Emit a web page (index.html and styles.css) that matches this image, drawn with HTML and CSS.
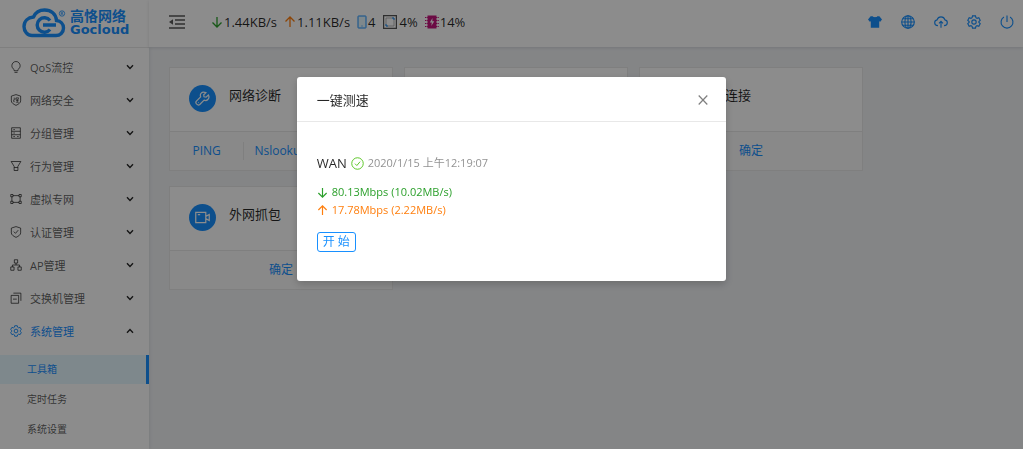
FILE: index.html
```html
<!DOCTYPE html>
<html lang="zh-CN">
<head>
    <meta charset="UTF-8">
    <meta name="viewport" content="width=device-width, initial-scale=1.0">
    <title>高恪网络 - 工具箱</title>
    <link rel="stylesheet" href="styles.css">
</head>
<body>
    <!-- shared icons -->
    <svg class="sprite" aria-hidden="true">
        <symbol id="i-chevron" viewBox="0 0 8 8"><path d="M1 2.2l3 3.2 3-3.2"/></symbol>
        <symbol id="i-gear" viewBox="0 0 16 16"><path d="M6.3 1h3.4l.5 2 1.3.8 2-.6 1.6 2.9-1.5 1.4v1l1.5 1.4-1.6 2.9-2-.6-1.3.8-.5 2H6.3l-.5-2-1.3-.8-2 .6L.9 9.9l1.500-1.400v-1L.9 6.100l1.600-2.900 2 .6L5.800 3z"/><circle cx="8" cy="8" r="2.5"/></symbol>
        <symbol id="i-down" viewBox="0 0 12 12"><path d="M6 1v10M1.500 6.500L6 11l4.500-4.500"/></symbol>
        <symbol id="i-up" viewBox="0 0 12 12"><path d="M6 11V1M1.500 5.500L6 1l4.500 4.500"/></symbol>
    </svg>

    <div class="layout">
        <aside class="sidebar">
            <a href="/" class="logo">
                <svg class="logo-mark" viewBox="0 0 44 30" aria-hidden="true">
                    <path d="M10 27.500h24c4 0 7.500-3 7.500-7.500 0-4-3-7-7-7.500C34 6 29 2 22.500 2c-5 0-9 2.500-11 7C6 9.500 2 13 2 18.500c0 5 3.500 9 8 9z" fill="none" stroke="#1890ff" stroke-width="3.400"/>
                    <path d="M28 12.500a7.200 7.200 0 1 0 0 9M21 17h13" fill="none" stroke="#1890ff" stroke-width="3.400"/>
                    <circle cx="40" cy="5.500" r="2.700" fill="none" stroke="#1890ff" stroke-width="0.800"/>
                    <path d="M39.200 7V4.200h1.400v1.500h-1.400M40.300 5.700l.8 1.300" fill="none" stroke="#1890ff" stroke-width="0.600"/>
                </svg>
                <span class="logo-text">
                    <span class="logo-cn">高恪网络</span>
                    <span class="logo-en">Gocloud</span>
                </span>
            </a>
            <nav>
                <ul class="menu">
                    <li><a href="#qos"><svg class="icon" viewBox="0 0 16 16"><path d="M5.500 11.500C3.500 10 2.500 8.500 2.500 6.200a5.500 5.500 0 0 1 11 0c0 2.300-1 3.800-3 5.300v1.500h-5zM6 15.200h4"/></svg><span>QoS流控</span><svg class="arrow"><use href="#i-chevron"/></svg></a></li>
                    <li><a href="#security"><svg class="icon" viewBox="0 0 16 16"><path d="M8 .8l6.200 2v6.400c0 2.400-2.500 4.200-6.200 6-3.700-1.800-6.200-3.600-6.200-6V2.800z"/><path d="M4.800 5.500h2v2.200h-2v2.500h1.500M8.300 5h3v2h-3zM9.800 7v4M8 8.700h3.500M7.800 11h4" stroke-width="1"/></svg><span>网络安全</span><svg class="arrow"><use href="#i-chevron"/></svg></a></li>
                    <li><a href="#group"><svg class="icon" viewBox="0 0 16 16"><path d="M2.200 1h11.600v14H2.200zM2.200 5.700h11.600M2.200 10.300h11.600M4.500 3.400h2M4.500 8h2M4.500 12.700h2M9.500 12.700h2"/></svg><span>分组管理</span><svg class="arrow"><use href="#i-chevron"/></svg></a></li>
                    <li><a href="#behavior"><svg class="icon" viewBox="0 0 16 16"><path d="M1.500 2h13l-4 6.500V14h-5V8.500zM5.500 10h5"/></svg><span>行为管理</span><svg class="arrow"><use href="#i-chevron"/></svg></a></li>
                    <li><a href="#vpn"><svg class="icon" viewBox="0 0 16 16"><path d="M1 2h3v3H1zM12 2h3v3h-3zM1 11h3v3H1zM12 11h3v3h-3zM4 3.500h8M4 12.500h8M2.500 5v6M13.500 5v6"/></svg><span>虚拟专网</span><svg class="arrow"><use href="#i-chevron"/></svg></a></li>
                    <li><a href="#auth"><svg class="icon" viewBox="0 0 16 16"><path d="M8 .8l6.200 2v6.400c0 2.400-2.500 4.200-6.200 6-3.700-1.800-6.200-3.600-6.200-6V2.800zM5 7.500l2.300 2.300L11 5.500"/></svg><span>认证管理</span><svg class="arrow"><use href="#i-chevron"/></svg></a></li>
                    <li><a href="#ap"><svg class="icon" viewBox="0 0 16 16"><path d="M5.800 1h4.400v4.400H5.800zM1 10.600h4.400V15H1zM10.600 10.600H15V15h-4.400zM8 5.400V8M3.200 10.600V8h9.600v2.600"/></svg><span>AP管理</span><svg class="arrow"><use href="#i-chevron"/></svg></a></li>
                    <li><a href="#switch"><svg class="icon" viewBox="0 0 16 16"><path d="M1.500 4.500h10V15h-10zM4.500 1.500h10v10.300M4 9.500h5"/></svg><span>交换机管理</span><svg class="arrow"><use href="#i-chevron"/></svg></a></li>
                    <li class="open">
                        <a href="#system"><svg class="icon"><use href="#i-gear"/></svg><span>系统管理</span><svg class="arrow"><use href="#i-chevron"/></svg></a>
                        <ul class="submenu">
                            <li><a href="#tools" class="active">工具箱</a></li>
                            <li><a href="#cron">定时任务</a></li>
                            <li><a href="#settings">系统设置</a></li>
                        </ul>
                    </li>
                </ul>
            </nav>
        </aside>

        <div class="main">
            <header class="topbar">
                <button type="button" class="icon-button fold" aria-label="收起菜单">
                    <svg viewBox="0 0 16 14"><path d="M0 1h16M6 5h10M6 9h10M0 13h16" fill="none" stroke="currentColor" stroke-width="1.300"/><path d="M0 7l4-2.800v5.600z" fill="currentColor"/></svg>
                </button>
                <div class="stats">
                    <span class="stat"><svg class="icon green"><use href="#i-down"/></svg>1.44KB/s</span>
                    <span class="stat"><svg class="icon orange"><use href="#i-up"/></svg>1.11KB/s</span>
                    <span class="stat"><svg class="phone" viewBox="0 0 10 14"><rect x="1" y="1" width="8" height="12" rx="0.500" fill="#e6f7ff" stroke="#1890ff"/><path d="M4.500 11h1" stroke="#1890ff"/></svg>4</span>
                    <span class="stat cpu"><svg viewBox="0 0 14 14"><path d="M.6.600h12.800v12.800H.6z" fill="none" stroke="#555" stroke-width="1.200"/><path d="M3 3h8v8H3z" fill="none" stroke="#999" stroke-width="0.700"/><path d="M9 3h2v2M3 9v2h2" fill="none" stroke="#1890ff"/></svg>4%</span>
                    <span class="stat memory"><svg viewBox="0 0 14 14"><path d="M2.500.5h9v13h-9z" fill="#c4147c"/><path d="M0 2.500h14M0 5.500h14M0 8.500h14M0 11.500h14" stroke="#c4147c" stroke-dasharray="1.500 0.700"/><path d="M3 1h8v12H3z" fill="#c4147c"/><path d="M7.500 3L4.800 7.500h2L6.300 11l3-4.700h-2z" fill="#fff"/></svg>14%</span>
                </div>
                <div class="tools">
                    <button type="button" class="icon-button" aria-label="主题"><svg viewBox="0 0 16 16"><path d="M5.300 1.500c.6 1.300 4.800 1.300 5.400 0H13l3 3.700-2 2.600-1.200-.6V14.500H3.200V7.200L2 7.800 0 5.200l3-3.700z" fill="currentColor"/></svg></button>
                    <button type="button" class="icon-button" aria-label="语言"><svg class="icon" viewBox="0 0 16 16"><circle cx="8" cy="8" r="7.200"/><ellipse cx="8" cy="8" rx="3.500" ry="7.200"/><path d="M8 .8v14.400M.8 8h14.400M2 4.300h12M2 11.700h12"/></svg></button>
                    <button type="button" class="icon-button" aria-label="升级"><svg class="icon" viewBox="0 0 16 16"><path d="M4.500 12.200C2.300 12 .8 10.700.8 8.800c0-1.700 1.200-2.900 2.700-3.200C4.200 3.300 6 2.200 8 2.200s3.800 1.100 4.500 3.400c1.500.3 2.700 1.500 2.700 3.200 0 1.900-1.500 3.200-3.700 3.400M8 14.500V7.500M5.700 9.500L8 7.200l2.300 2.300"/></svg></button>
                    <button type="button" class="icon-button" aria-label="设置"><svg class="icon"><use href="#i-gear"/></svg></button>
                    <button type="button" class="icon-button" aria-label="退出"><svg class="icon" viewBox="0 0 16 16"><path d="M4.500 2.300a6.800 6.800 0 1 0 7 0M8 .5v7.500"/></svg></button>
                </div>
            </header>

            <main class="cards">
                <section class="card">
                    <div class="card-body">
                        <span class="avatar"><svg class="icon" viewBox="0 0 16 16"><path d="M14.300 4.300l-2.500 2.200-2.200-.3-.3-2.200 2.300-2.300C9.500.8 7.700 1 6.600 2.300c-1 1.100-1.100 2.500-.6 3.900L1.500 10.800c-1.800 2 1.500 5.400 3.600 3.600L9.700 9.800c1.500.6 3 .4 4-.7 1.200-1.200 1.500-3.200.6-4.800zM3.500 12.500l.4-.4"/></svg></span>
                        <h2>网络诊断</h2>
                    </div>
                    <div class="card-actions"><a href="#ping">PING</a><a href="#nslookup">Nslookup</a><a href="#trace">Trace</a></div>
                </section>
                <section class="card">
                    <div class="card-body">
                        <span class="avatar"><svg class="icon"><use href="#i-up"/></svg></span>
                        <h2>一键测速</h2>
                    </div>
                    <div class="card-actions"><a href="#speed">确定</a></div>
                </section>
                <section class="card">
                    <div class="card-body">
                        <span class="avatar"><svg class="icon"><use href="#i-down"/></svg></span>
                        <h2>远程连接</h2>
                    </div>
                    <div class="card-actions"><a href="#remote">确定</a></div>
                </section>
                <section class="card">
                    <div class="card-body">
                        <span class="avatar"><svg class="icon" viewBox="0 0 16 16"><path d="M.8 2.500h10.700v11H.8zM11.500 6.800l3.700-2v6.400l-3.700-2M3 5h2.500"/></svg></span>
                        <h2>外网抓包</h2>
                    </div>
                    <div class="card-actions"><a href="#capture">确定</a></div>
                </section>
            </main>
        </div>
    </div>

    <div class="mask">
        <div class="modal" role="dialog" aria-modal="true" aria-labelledby="modal-title">
            <div class="modal-header">
                <h2 id="modal-title">一键测速</h2>
                <button type="button" class="icon-button close" aria-label="关闭"><svg class="icon" viewBox="0 0 10 10"><path d="M.7.500l8.600 9M9.300.500l-8.600 9"/></svg></button>
            </div>
            <div class="modal-body">
                <div class="wan">
                    <span>WAN</span>
                    <svg class="icon" viewBox="0 0 14 14"><circle cx="7" cy="7" r="6.200"/><path d="M4.300 7.200l2 2 3.500-4.200"/></svg>
                    <time datetime="2020-01-15T00:19:07">2020/1/15 上午12:19:07</time>
                </div>
                <div class="speed green"><svg class="icon"><use href="#i-down"/></svg>80.13Mbps (10.02MB/s)</div>
                <div class="speed orange"><svg class="icon"><use href="#i-up"/></svg>17.78Mbps (2.22MB/s)</div>
                <button type="button" class="start">开 始</button>
            </div>
        </div>
    </div>
</body>
</html>
```
FILE: styles.css
```css
* {
    box-sizing: border-box;
}

body {
    margin: 0;
    font-family: "Open Sans", "Noto Sans CJK SC", sans-serif;
    font-size: 11px;
    color: rgba(0, 0, 0, 0.65);
    background-color: #f0f2f5;
}

ul {
    list-style: none;
    margin: 0;
    padding: 0;
}

a {
    color: #1890ff;
    text-decoration: none;
}

h2 {
    margin: 0;
    font-size: 13px;
    font-weight: 400;
    line-height: 20px;
    color: rgba(0, 0, 0, 0.85);
}

svg {
    display: block;
    flex: none;
}

.sprite {
    position: absolute;
    width: 0;
    height: 0;
}

.icon,
.arrow {
    width: 12px;
    height: 12px;
    fill: none;
    stroke: currentColor;
    stroke-width: 1.3;
}

.green {
    color: #2ca02c;
}

.orange {
    color: #ff7f0e;
}

.icon-button {
    padding: 0;
    border: none;
    background: none;
    color: #1890ff;
    cursor: pointer;
}

.layout {
    display: flex;
    height: 100vh;
    overflow: hidden;
}

/* sidebar */
.sidebar {
    flex: none;
    width: 149px;
    background-color: #fff;
    box-shadow: 1px 0 3px rgba(0, 21, 41, 0.08);
}

.logo {
    display: flex;
    align-items: center;
    gap: 4px;
    height: 48px;
    padding: 0 0 2px 22px;
    border-bottom: 1px solid #e8e8e8;
}

.logo-mark {
    width: 44px;
    height: 30px;
}

.logo-text {
    display: flex;
    flex-direction: column;
    font-weight: 700;
}

.logo-cn {
    font-family: "Noto Sans CJK SC", sans-serif;
    font-size: 14px;
    line-height: 14px;
}

.logo-en {
    font-family: "DejaVu Sans", sans-serif;
    font-size: 13px;
    line-height: 15px;
}

.menu {
    padding-top: 2px;
}

.menu > li > a {
    display: flex;
    align-items: center;
    gap: 8px;
    height: 33px;
    padding: 0 15px 0 10px;
    color: rgba(0, 0, 0, 0.65);
}

.menu .arrow {
    width: 8px;
    height: 8px;
    margin-left: auto;
    stroke-width: 1.4;
    color: rgba(0, 0, 0, 0.85);
}

.menu > .open > a {
    color: #1890ff;
}

.open .arrow {
    transform: rotate(180deg);
}

.submenu {
    display: grid;
    gap: 1px;
    padding-top: 8px;
}

.submenu a {
    display: block;
    padding-left: 27px;
    font-size: 10px;
    line-height: 29px;
    color: rgba(0, 0, 0, 0.65);
}

.submenu .active {
    color: #1890ff;
    background-color: #e6f7ff;
    border-right: 3px solid #1890ff;
}

/* top bar */
.main {
    flex: 1;
    min-width: 0;
}

.topbar {
    display: flex;
    align-items: center;
    height: 47px;
    padding: 0 9px 3px 20px;
    background-color: #fff;
    box-shadow: 0 1px 3px rgba(0, 21, 41, 0.12);
}

.fold {
    color: rgba(0, 0, 0, 0.65);
}

.fold svg {
    width: 16px;
    height: 14px;
}

.stats {
    display: flex;
    gap: 7px;
    margin-left: 26px;
    font-size: 13px;
    font-weight: 500;
    color: rgba(0, 0, 0, 0.85);
}

.stat {
    display: flex;
    align-items: center;
    gap: 1px;
}

.phone {
    width: 10px;
    height: 14px;
}

.cpu {
    gap: 3px;
}

.cpu svg,
.memory svg {
    width: 14px;
    height: 14px;
}

.tools {
    display: flex;
    gap: 19px;
    margin-left: auto;
}

.tools svg {
    width: 14px;
    height: 14px;
}

/* cards */
.cards {
    display: grid;
    grid-template-columns: repeat(auto-fill, 224px);
    gap: 15px 11px;
    padding: 20px;
}

.card {
    background-color: #fff;
    border: 1px solid #e8e8e8;
}

.card-body {
    display: flex;
    gap: 13px;
    height: 63px;
    padding: 17px 19px;
}

.avatar {
    display: flex;
    align-items: center;
    justify-content: center;
    width: 27px;
    height: 27px;
    border-radius: 50%;
    color: #fff;
    background-color: #1890ff;
}

.avatar .icon {
    width: 15px;
    height: 15px;
}

.card-actions {
    display: flex;
    padding: 10px 0;
    border-top: 1px solid #e8e8e8;
    background-color: #fafafa;
}

.card-actions a {
    flex: 1;
    font-size: 12px;
    line-height: 18px;
    text-align: center;
}

.card-actions a + a {
    border-left: 1px solid #e8e8e8;
}

/* modal */
.mask {
    position: fixed;
    inset: 0;
    padding-top: 77px;
    background-color: rgba(0, 0, 0, 0.45);
}

.modal {
    width: 42%;
    min-width: 320px;
    margin: 0 auto;
    border-radius: 3px;
    background-color: #fff;
    box-shadow: 0 3px 9px rgba(0, 0, 0, 0.2);
}

.modal-header {
    display: flex;
    align-items: center;
    justify-content: space-between;
    padding: 13px 18px 11px 20px;
    border-bottom: 1px solid #e8e8e8;
}

.close {
    color: rgba(0, 0, 0, 0.5);
}

.close .icon {
    width: 10px;
    height: 10px;
    stroke-width: 1.2;
}

.modal-body {
    padding: 32px 20px 29px;
}

.wan {
    display: flex;
    align-items: center;
    gap: 4px;
    margin-bottom: 11px;
    font-size: 13px;
    line-height: 18px;
    color: rgba(0, 0, 0, 0.85);
}

.wan .icon {
    width: 13px;
    height: 13px;
    stroke-width: 1;
    color: #52c41a;
}

.wan time {
    font-size: 11px;
    color: rgba(0, 0, 0, 0.45);
}

.speed {
    display: flex;
    align-items: center;
    gap: 4px;
    line-height: 18px;
}

.speed .icon {
    width: 11px;
    height: 11px;
}

.start {
    display: block;
    height: 20px;
    margin-top: 13px;
    padding: 0 5px;
    border: 1px solid #1890ff;
    border-radius: 3px;
    font-family: inherit;
    font-size: 12px;
    line-height: 18px;
    color: #1890ff;
    background-color: #fff;
    cursor: pointer;
}
```
